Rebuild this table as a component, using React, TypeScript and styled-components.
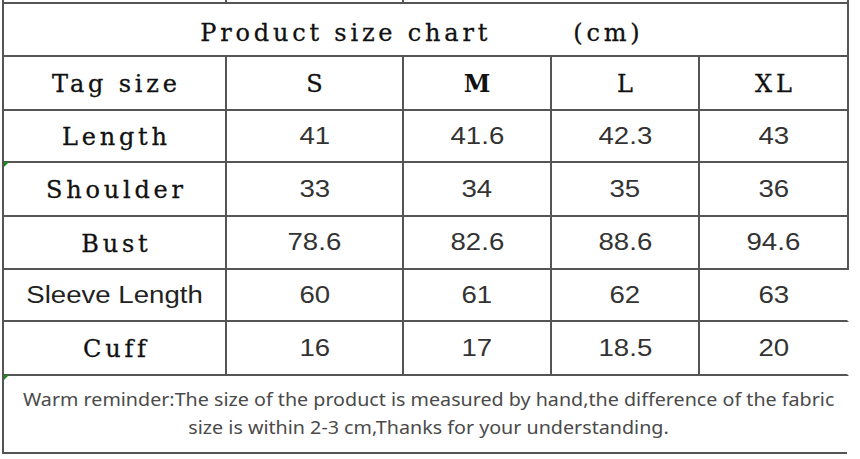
import React from "react";
import styled, { createGlobalStyle, css } from "styled-components";

const Global = createGlobalStyle`
  html, body { margin: 0; padding: 0; background: #fff; }
  body { width: 860px; height: 459px; overflow: hidden; }
`;

const LINE = "2px solid #555";

const Sheet = styled.div`
  margin-left: 2px;
  width: 847px;
  display: grid;
  grid-template-columns: 223px 177px 148px 148px 149px;
  border-left: ${LINE};
  box-sizing: border-box;
`;

const Stub = styled.div<{ $line?: boolean }>`
  height: 2px;
  box-sizing: border-box;
  ${(p) => p.$line && css`border-right: ${LINE};`}
`;

const Title = styled.div`
  grid-column: 1 / -1;
  height: 55px;
  box-sizing: border-box;
  border-top: ${LINE};
  border-right: ${LINE};
  border-bottom: ${LINE};
  display: flex;
  align-items: center;
  justify-content: center;
  gap: 86px;
  padding: 4px 11px 0 0;
`;

const Cell = styled.div<{ $h: number; $open?: boolean; $marker?: boolean }>`
  position: relative;
  height: ${(p) => p.$h}px;
  box-sizing: border-box;
  border-bottom: ${LINE};
  border-right: ${(p) => (p.$open ? "2px solid transparent" : LINE)};
  display: flex;
  align-items: center;
  justify-content: center;
  ${(p) =>
    p.$marker &&
    css`
      &::before {
        content: "";
        position: absolute;
        left: 0;
        top: -1px;
        border-top: 5px solid #1a8a1a;
        border-right: 5px solid transparent;
      }
    `}
`;

const Mono = styled.span<{ $bold?: boolean }>`
  font-family: "DejaVu Serif", "Liberation Serif", serif;
  font-size: 24px;
  line-height: 30px;
  letter-spacing: 3.8px;
  margin-right: -3.8px;
  color: #111;
  font-weight: ${(p) => (p.$bold ? 700 : 400)};
  -webkit-text-stroke: ${(p) => (p.$bold ? "0" : "0.3px #111")};
  white-space: pre;
  padding-top: 2px;
`;

const SansText = styled.span<{ $dark?: boolean }>`
  display: inline-block;
  font-family: "Liberation Sans", Arial, sans-serif;
  font-size: 23px;
  color: ${(p) => (p.$dark ? "#222" : "#333")};
  transform: scaleX(1.2);
`;

const Footer = styled.div`
  grid-column: 1 / -1;
  position: relative;
  height: 78px;
  box-sizing: border-box;
  border-bottom: ${LINE};
  width: 843px;
  display: flex;
  flex-direction: column;
  align-items: center;
  justify-content: center;
  padding: 0 0 2px 6px;
  &::before {
    content: "";
    position: absolute;
    left: 0;
    top: -1px;
    border-top: 5px solid #1a8a1a;
    border-right: 5px solid transparent;
  }
`;

const FooterLine = styled.span`
  display: inline-block;
  font-family: "Noto Sans", "Open Sans", sans-serif;
  font-size: 17.5px;
  line-height: 28px;
  color: #4a4a4a;
  white-space: nowrap;
  transform: scaleX(1.125);
`;

type Row = {
  label: string;
  mono: boolean;
  values: string[];
  h: number;
  open?: boolean;
  marker?: boolean;
};

const rows: Row[] = [
  { label: "Length", mono: true, values: ["41", "41.6", "42.3", "43"], h: 52 },
  { label: "Shoulder", mono: true, values: ["33", "34", "35", "36"], h: 54, marker: true },
  { label: "Bust", mono: true, values: ["78.6", "82.6", "88.6", "94.6"], h: 53 },
  { label: "Sleeve Length", mono: false, values: ["60", "61", "62", "63"], h: 52, open: true },
  { label: "Cuff", mono: true, values: ["16", "17", "18.5", "20"], h: 54, open: true },
];

const sizes = ["S", "M", "L", "XL"];

export default function App() {
  return (
    <>
      <Global />
      <Sheet>
        <Stub $line />
        <Stub $line />
        <Stub />
        <Stub />
        <Stub $line />

        <Title>
          <Mono>Product size chart</Mono>
          <Mono>(cm)</Mono>
        </Title>

        <Cell $h={54}>
          <Mono>Tag size</Mono>
        </Cell>
        {sizes.map((s) => (
          <Cell key={s} $h={54}>
            <Mono $bold={s === "M"}>{s}</Mono>
          </Cell>
        ))}

        {rows.map((r) => (
          <React.Fragment key={r.label}>
            <Cell $h={r.h} $marker={r.marker}>
              {r.mono ? <Mono>{r.label}</Mono> : <SansText $dark>{r.label}</SansText>}
            </Cell>
            {r.values.map((v, i) => (
              <Cell key={i} $h={r.h} $open={r.open && i === 3}>
                <SansText>{v}</SansText>
              </Cell>
            ))}
          </React.Fragment>
        ))}

        <Footer>
          <FooterLine>
            Warm reminder:The size of the product is measured by hand,the difference of the fabric
          </FooterLine>
          <FooterLine>size is within 2-3 cm,Thanks for your understanding.</FooterLine>
        </Footer>
      </Sheet>
    </>
  );
}
